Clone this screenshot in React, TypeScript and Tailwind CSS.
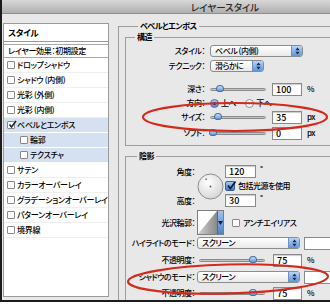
import React from 'react';

type Effect = { label: string; checked?: boolean; sub?: boolean; sel?: boolean };

const effects: Effect[] = [
  { label: 'ドロップシャドウ' },
  { label: 'シャドウ (内側)' },
  { label: '光彩 (外側)' },
  { label: '光彩 (内側)' },
  { label: 'ベベルとエンボス', checked: true, sel: true },
  { label: '輪郭', sub: true, sel: true },
  { label: 'テクスチャ', sub: true, sel: true },
  { label: 'サテン' },
  { label: 'カラーオーバーレイ' },
  { label: 'グラデーションオーバーレイ' },
  { label: 'パターンオーバーレイ' },
  { label: '境界線' },
];

function Box({ checked }: { checked?: boolean }) {
  return (
    <span className="relative flex h-[8px] w-[8px] shrink-0 items-center justify-center rounded-[1px] border border-[#8a8a8a] bg-white">
      {checked && (
        <svg width="9" height="9" viewBox="0 0 9 9" className="absolute left-[0px] top-[-2px]">
          <path d="M1.5 4.5L3.5 7L8 1" stroke="#1d2433" strokeWidth="1.6" fill="none" />
        </svg>
      )}
    </span>
  );
}

function EffectList() {
  return (
    <div className="mb-[3px] mt-[9px] flex w-[106px] shrink-0 flex-col border border-[#9a9a9a] bg-white tracking-[-0.3px]">
      <div className="flex h-[18px] items-center border-b border-[#9a9a9a] pl-[4px] text-[8.5px] font-bold leading-none">
        スタイル
      </div>
      <div className="mt-[2px] flex h-[14px] items-center border-y border-[#a8a8a8] pl-[4px] leading-none">
        レイヤー効果：初期設定
      </div>
      {effects.map((e) => (
        <div
          key={e.label}
          className={`flex h-[15px] items-center gap-[2px] border-b leading-none ${
            e.sel ? 'border-white bg-[#d5e1f1]' : 'border-[#efefef]'
          } ${e.sub ? 'pl-[16px]' : 'pl-[3px]'}`}
        >
          <Box checked={e.checked} />
          <span className="whitespace-nowrap">{e.label}</span>
        </div>
      ))}
    </div>
  );
}

function Select({ text, width }: { text: string; width: string }) {
  return (
    <div className={`flex h-[12px] items-center rounded-[3px] border border-[#8c8c8c] bg-linear-to-b from-white to-[#e9e9e9] pl-[4px] ${width}`}>
      <span className="flex-1 whitespace-nowrap leading-none">{text}</span>
      <span className="flex h-full w-[11px] items-center justify-center rounded-r-[2px] border-l border-[#6f8fbf] bg-linear-to-b from-[#b6d4f8] to-[#5c95de]">
        <svg width="5" height="8" viewBox="0 0 5 8">
          <path d="M2.5 0.5L4.6 3.2H0.4z M2.5 7.5L0.4 4.8h4.2z" fill="#1b2a45" />
        </svg>
      </span>
    </div>
  );
}

function Slider({ pos, width }: { pos: number; width: string }) {
  return (
    <div className={`relative flex h-[12px] items-center ${width}`}>
      <div className="h-[3px] w-full rounded-full border border-[#8a8a8a] bg-linear-to-b from-[#a5a5a5] to-[#e2e2e2]" />
      <span
        className="absolute top-[2px] h-[7px] w-[8px] rounded-[50%_50%_50%_50%/60%_60%_40%_40%] border border-[#4c6f9e] bg-linear-to-b from-[#c9e0fb] to-[#5f97d9]"
        style={{ left: `${pos}px` }}
      />
    </div>
  );
}

function NumBox({ value, width }: { value: string; width: string }) {
  return (
    <div className={`flex h-[13px] items-center border border-[#8a8a8a] bg-white pl-[3px] text-[9px] leading-none tracking-normal shadow-[inset_0_1px_1px_rgba(0,0,0,0.2)] ${width}`}>
      {value}
    </div>
  );
}

function Label({ text, width }: { text: string; width: string }) {
  return (
    <span className={`shrink-0 whitespace-nowrap pr-[1px] text-right leading-none ${width}`}>{text}：</span>
  );
}

function Radio({ on }: { on?: boolean }) {
  return (
    <span
      className={`flex h-[9px] w-[9px] items-center justify-center rounded-full border ${
        on ? 'border-[#3e6db0] bg-linear-to-b from-[#a8cbf5] to-[#4f8ad8]' : 'border-[#8a8a8a] bg-white'
      }`}
    >
      {on && <span className="h-[3px] w-[3px] rounded-full bg-[#10223f]" />}
    </span>
  );
}

function Dial() {
  return (
    <svg width="27" height="27" viewBox="0 0 27 27">
      <defs>
        <radialGradient id="dg" cx="0.4" cy="0.35" r="0.7">
          <stop offset="0" stopColor="#ffffff" />
          <stop offset="1" stopColor="#d4d4d4" />
        </radialGradient>
      </defs>
      <circle cx="13.5" cy="13.5" r="12.5" fill="url(#dg)" stroke="#8c8c8c" />
      <circle cx="13.5" cy="13.5" r="0.9" fill="#555" />
      <circle cx="9.2" cy="6.2" r="0.9" fill="#777" />
    </svg>
  );
}

function ContourSwatch() {
  return (
    <div className="flex h-[25px] w-[27px] border border-[#7e7e7e] bg-white">
      <svg width="19" height="23" viewBox="0 0 19 23">
        <defs>
          <linearGradient id="cg" x1="0" y1="0" x2="1" y2="0">
            <stop offset="0" stopColor="#d0d0d0" />
            <stop offset="1" stopColor="#8a8a8a" />
          </linearGradient>
        </defs>
        <path d="M0 23L19 0V23z" fill="url(#cg)" />
      </svg>
      <div className="flex flex-1 items-center justify-center border-l border-[#4a6a9a] bg-linear-to-b from-[#9fc3ee] to-[#4d83cc]">
        <svg width="5" height="4" viewBox="0 0 5 4">
          <path d="M0 0h5L2.5 4z" fill="#0f1f3a" />
        </svg>
      </div>
    </div>
  );
}

function BlueCheck() {
  return (
    <span className="relative flex h-[10px] w-[10px] shrink-0 rounded-[2px] border border-[#365f9a] bg-linear-to-b from-[#a6c9f4] to-[#3f7bd0]">
      <svg width="11" height="11" viewBox="0 0 11 11" className="absolute left-[0px] top-[-2px]">
        <path d="M2 5.5L4.3 8.5L9.5 1.5" stroke="#0d1a33" strokeWidth="1.8" fill="none" />
      </svg>
    </span>
  );
}

function Structure() {
  return (
    <fieldset className="mt-[1px] border-y border-l border-[#9d9d9d] pb-[5px]">
      <legend className="ml-[9px] px-[2px] font-bold leading-[10px]">構造</legend>
      <div className="mt-[2px] flex h-[14px] items-center">
        <Label text="スタイル" width="w-[80px]" />
        <div className="ml-[4px]">
          <Select text="ベベル (内側)" width="w-[93px]" />
        </div>
      </div>
      <div className="mt-[1px] flex h-[14px] items-center">
        <Label text="テクニック" width="w-[80px]" />
        <div className="ml-[4px]">
          <Select text="滑らかに" width="w-[54px]" />
        </div>
      </div>
      <div className="mt-[9px] flex h-[14px] items-center">
        <Label text="深さ" width="w-[80px]" />
        <div className="ml-[4px]">
          <Slider pos={6} width="w-[56px]" />
        </div>
        <div className="ml-[6px]">
          <NumBox value="100" width="w-[30px]" />
        </div>
        <span className="ml-[5px] leading-none">%</span>
      </div>
      <div className="flex h-[14px] items-center leading-none">
        <Label text="方向" width="w-[80px]" />
        <div className="ml-[4px] flex items-center gap-[2px]">
          <Radio on />
          <span>上へ</span>
        </div>
        <div className="ml-[9px] flex items-center gap-[2px]">
          <Radio />
          <span>下へ</span>
        </div>
      </div>
      <div className="flex h-[14px] items-center">
        <Label text="サイズ" width="w-[80px]" />
        <div className="ml-[4px]">
          <Slider pos={4} width="w-[56px]" />
        </div>
        <div className="ml-[6px]">
          <NumBox value="35" width="w-[30px]" />
        </div>
        <span className="ml-[5px] leading-none">px</span>
      </div>
      <div className="mt-[2px] flex h-[14px] items-center">
        <Label text="ソフト" width="w-[80px]" />
        <div className="ml-[4px]">
          <Slider pos={-1} width="w-[56px]" />
        </div>
        <div className="ml-[6px]">
          <NumBox value="0" width="w-[30px]" />
        </div>
        <span className="ml-[5px] leading-none">px</span>
      </div>
    </fieldset>
  );
}

function Shading() {
  return (
    <fieldset className="mt-[5px] border-t border-l border-[#9d9d9d]">
      <legend className="ml-[11px] px-[2px] font-bold leading-[10px]">陰影</legend>
      <div className="mt-[4px] grid grid-cols-[70px_29px_auto] grid-rows-[13px_16px_13px] items-center">
        <Label text="角度" width="w-[70px]" />
        <div className="row-span-3 ml-[1px] flex items-center">
          <Dial />
        </div>
        <div className="flex items-center">
          <NumBox value="120" width="w-[31px]" />
          <span className="ml-[4px] self-start leading-none">°</span>
        </div>
        <span />
        <div className="flex items-center gap-[3px] leading-none">
          <BlueCheck />
          <span className="whitespace-nowrap">包括光源を使用</span>
        </div>
        <Label text="高度" width="w-[70px]" />
        <div className="flex items-center">
          <NumBox value="30" width="w-[31px]" />
          <span className="ml-[4px] self-start leading-none">°</span>
        </div>
      </div>
      <div className="mt-[3px] flex h-[25px] items-center">
        <Label text="光沢輪郭" width="w-[70px]" />
        <div className="ml-[1px]">
          <ContourSwatch />
        </div>
        <div className="ml-[8px] flex items-center gap-[3px] leading-none">
          <Box />
          <span className="whitespace-nowrap">アンチエイリアス</span>
        </div>
      </div>
      <div className="mt-[1px] flex h-[14px] items-center">
        <Label text="ハイライトのモード" width="w-[70px]" />
        <div className="ml-[1px]">
          <Select text="スクリーン" width="w-[103px]" />
        </div>
        <div className="ml-[4px] h-[13px] w-[30px] shrink-0 border border-[#8a8a8a] bg-white" />
      </div>
      <div className="mt-[3px] flex h-[14px] items-center">
        <Label text="不透明度" width="w-[70px]" />
        <div className="ml-[3px]">
          <Slider pos={50} width="w-[66px]" />
        </div>
        <div className="ml-[8px]">
          <NumBox value="75" width="w-[29px]" />
        </div>
        <span className="ml-[5px] leading-none">%</span>
      </div>
      <div className="mt-[3px] flex h-[14px] items-center">
        <Label text="シャドウのモード" width="w-[70px]" />
        <div className="ml-[1px]">
          <Select text="スクリーン" width="w-[103px]" />
        </div>
        <div className="ml-[4px] h-[13px] w-[30px] shrink-0 border border-[#8a8a8a] bg-white" />
      </div>
      <div className="mt-[2px] flex h-[14px] items-center">
        <Label text="不透明度" width="w-[70px]" />
        <div className="ml-[3px]">
          <Slider pos={50} width="w-[66px]" />
        </div>
        <div className="ml-[8px]">
          <NumBox value="75" width="w-[29px]" />
        </div>
        <span className="ml-[5px] leading-none">%</span>
      </div>
    </fieldset>
  );
}

export default function App() {
  return (
    <div className="relative h-[307px] w-[330px] overflow-hidden bg-white font-['Noto_Sans_CJK_JP',sans-serif] text-[8px] font-medium tracking-[-0.5px] text-black [font-feature-settings:'palt']">
      <div className="flex h-[302px] flex-col border-b-2 border-l-2 border-[#1c1c1c] bg-[#e8e8e8]">
        <div className="flex h-[14px] shrink-0 items-center justify-center border-b border-[#8e8e8e] bg-linear-to-b from-[#d8d8d8] to-[#b0b0b0] pl-[118px] text-[9.5px] leading-[12px] tracking-normal text-[#2a2a2a]">
          レイヤースタイル
        </div>
        <div className="flex min-h-0 flex-1 pl-px">
          <EffectList />
          <div className="ml-[9px] mt-[7px] min-w-0 flex-1">
            <fieldset className="h-full border-t border-l border-[#9d9d9d] pl-[6px]">
              <legend className="ml-[13px] px-[2px] font-bold leading-[10px]">ベベルとエンボス</legend>
              <Structure />
              <Shading />
            </fieldset>
          </div>
        </div>
      </div>
      <svg className="pointer-events-none absolute inset-0" width="330" height="307" viewBox="0 0 330 307">
        <ellipse cx="235" cy="117" rx="92" ry="14" fill="none" stroke="#d42a1e" strokeWidth="2.2" />
        <ellipse cx="228" cy="279" rx="100" ry="14.5" fill="none" stroke="#d42a1e" strokeWidth="2.2" transform="rotate(-1.5 228 279)" />
      </svg>
    </div>
  );
}
